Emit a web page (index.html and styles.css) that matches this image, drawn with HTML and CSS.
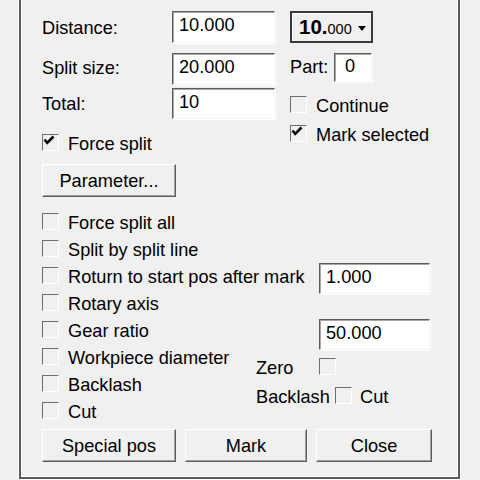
FILE: index.html
```html
<!DOCTYPE html>
<html>
<head>
<meta charset="utf-8">
<link rel="stylesheet" href="styles.css">
</head>
<body>
<div class="frame">
  <div class="top">
    <div class="col-left">
      <div class="frow r1"><span class="lbl">Distance:</span><div class="field wide">10.000</div></div>
      <div class="frow r2"><span class="lbl up">Split size:</span><div class="field wide">20.000</div></div>
      <div class="frow r3"><span class="lbl">Total:</span><div class="field wide">10</div></div>
      <div class="check force"><span class="box"><svg viewBox="0 0 17 17" width="17" height="17"><polyline points="2.5,5.5 5.2,8.8 11.5,2.5" fill="none" stroke="#000" stroke-width="2.6"/></svg></span><span class="t">Force split</span></div>
    </div>
    <div class="col-right">
      <div class="combo"><span class="val"><span class="big">10.</span><span class="small">000</span></span><span class="arrow"></span></div>
      <div class="part"><span class="part-lbl">Part:</span><div class="field part-field">0</div></div>
      <div class="check cont"><span class="box"></span><span class="t">Continue</span></div>
      <div class="check marksel"><span class="box"><svg viewBox="0 0 17 17" width="17" height="17"><polyline points="2.5,5.5 5.2,8.8 11.5,2.5" fill="none" stroke="#000" stroke-width="2.6"/></svg></span><span class="t">Mark selected</span></div>
    </div>
  </div>
  <div class="btn param">Parameter...</div>
  <div class="opts">
    <div class="check opt"><span class="box"></span><span class="t">Force split all</span></div>
    <div class="check opt"><span class="box"></span><span class="t">Split by split line</span></div>
    <div class="check opt"><span class="box"></span><span class="t">Roturn to start pos after mark</span></div>
    <div class="field grid-field f1">1.000</div>
    <div class="check opt"><span class="box"></span><span class="t">Rotary axis</span></div>
    <div class="check opt"><span class="box"></span><span class="t">Gear ratio</span></div>
    <div class="field grid-field f2">50.000</div>
    <div class="check opt narrow"><span class="box"></span><span class="t">Workpiece diameter</span></div>
    <div class="check opt narrow"><span class="box"></span><span class="t">Backlash</span></div>
    <div class="check opt narrow"><span class="box"></span><span class="t">Cut</span></div>
    <div class="group">
      <div class="zero-row"><span class="zero-lbl t">Zero</span><span class="box"></span></div>
      <div class="bl-row"><span class="bl-lbl t">Backlash</span><span class="box"></span><span class="cut-lbl t">Cut</span></div>
    </div>
  </div>
  <div class="buttons">
    <div class="btn b-special">Special pos</div>
    <div class="btn b-mark">Mark</div>
    <div class="btn b-close">Close</div>
  </div>
</div>
</body>
</html>
```
FILE: styles.css
```css
html, body {
  margin: 0;
  padding: 0;
  background: #f0f0f0;
  overflow: hidden;
}
body {
  width: 480px;
  height: 480px;
  font-family: "Liberation Sans", Arial, sans-serif;
  font-size: 18.2px;
  color: #000;
}
.frame {
  box-sizing: border-box;
  margin-left: 19px;
  width: 441px;
  height: 479px;
  border: 2px solid #5a5a5a;
  border-top: none;
  box-shadow: 1px 1px 0 #fff, -1px 0 0 #fff, inset 1px 0 0 #fff, inset -1px -1px 0 #fff;
  padding-left: 21px;
}
.top {
  display: flex;
  height: 151px;
}
.col-left {
  width: 233px;
  display: flex;
  flex-direction: column;
}
.col-right {
  margin-left: 15px;
  display: flex;
  flex-direction: column;
}
.frow {
  display: flex;
  align-items: center;
  height: 32px;
}
.r1 { margin-top: 11px; }
.r2 { margin-top: 10px; }
.r3 { margin-top: 3px; height: 31px; }
.lbl {
  width: 130px;
  padding-top: 2px;
}
.lbl.up {
  padding-top: 0;
  padding-bottom: 2px;
}
.field {
  box-sizing: border-box;
  background: #fff;
  border: 1px solid;
  border-color: #5c5c5c #f4f4f4 #f4f4f4 #5c5c5c;
  box-shadow: inset 1px 1px 0 #a8a8a8, 1px 1px 0 #fff;
  display: flex;
  align-items: center;
  padding-left: 6px;
  padding-bottom: 3px;
  height: 100%;
}
.wide { width: 103px; }
.check {
  display: flex;
  align-items: center;
  height: 17px;
  gap: 9px;
  white-space: nowrap;
}
.t {
  padding-top: 3px;
}
.box {
  box-sizing: border-box;
  flex: none;
  width: 17px;
  height: 17px;
  border: 1px solid;
  border-color: #6e6e6e #fff #fff #6e6e6e;
  background: #f0f0f0;
  display: block;
  position: relative;
}
.box svg {
  position: absolute;
  left: -1px;
  top: -1px;
}
.force { margin-top: 15px; }
.combo {
  box-sizing: border-box;
  margin-top: 11px;
  width: 83px;
  height: 32px;
  border: 2px solid #3a3a3a;
  box-shadow: inset 1px 1px 0 #fff;
  display: flex;
  align-items: center;
  padding-left: 7px;
  padding-right: 5px;
}
.val { line-height: 1; }
.big {
  font-size: 20.5px;
  font-weight: bold;
}
.small {
  font-size: 14.5px;
}
.arrow {
  margin-left: auto;
  width: 0;
  height: 0;
  border-left: 4px solid transparent;
  border-right: 4px solid transparent;
  border-top: 5px solid #000;
  margin-top: 2px;
}
.part {
  display: flex;
  align-items: center;
  margin-top: 10px;
  height: 29px;
}
.part-lbl { width: 44px; }
.part-field {
  width: 38px;
  padding-left: 10px;
}
.cont { margin-top: 14px; }
.marksel { margin-top: 12px; }
.btn {
  box-sizing: border-box;
  height: 33px;
  border: 1px solid;
  border-color: #fff #5f5f5f #5f5f5f #fff;
  box-shadow: inset -1px -1px 0 #a0a0a0;
  background: #f0f0f0;
  display: flex;
  align-items: center;
  justify-content: center;
  padding-top: 1px;
}
.param {
  margin-top: 13px;
  width: 134px;
}
.opts {
  display: grid;
  grid-template-columns: 214px 63px 111px;
  grid-template-rows: repeat(8, 27px);
  margin-top: 11px;
}
.opt {
  grid-column: 1 / 3;
  height: 27px;
}
.opt.narrow { grid-column: 1; }
.grid-field {
  grid-column: 3;
  align-self: start;
  height: 31px;
}
.f1 { margin-top: 1px; }
.f2 { margin-top: 3px; }
.group {
  grid-column: 2 / 4;
  grid-row: 6 / 9;
  display: flex;
  flex-direction: column;
}
.zero-row {
  display: flex;
  align-items: center;
  height: 17px;
  margin-top: 15px;
}
.zero-lbl { width: 63px; }
.bl-row {
  display: flex;
  align-items: center;
  height: 17px;
  margin-top: 12px;
  white-space: nowrap;
}
.bl-lbl { width: 79px; }
.cut-lbl { margin-left: 8px; }
.buttons {
  display: flex;
  gap: 9px;
  margin-top: 5px;
}
.b-special { width: 134px; }
.b-mark { width: 122px; }
.b-close { width: 116px; }
```
